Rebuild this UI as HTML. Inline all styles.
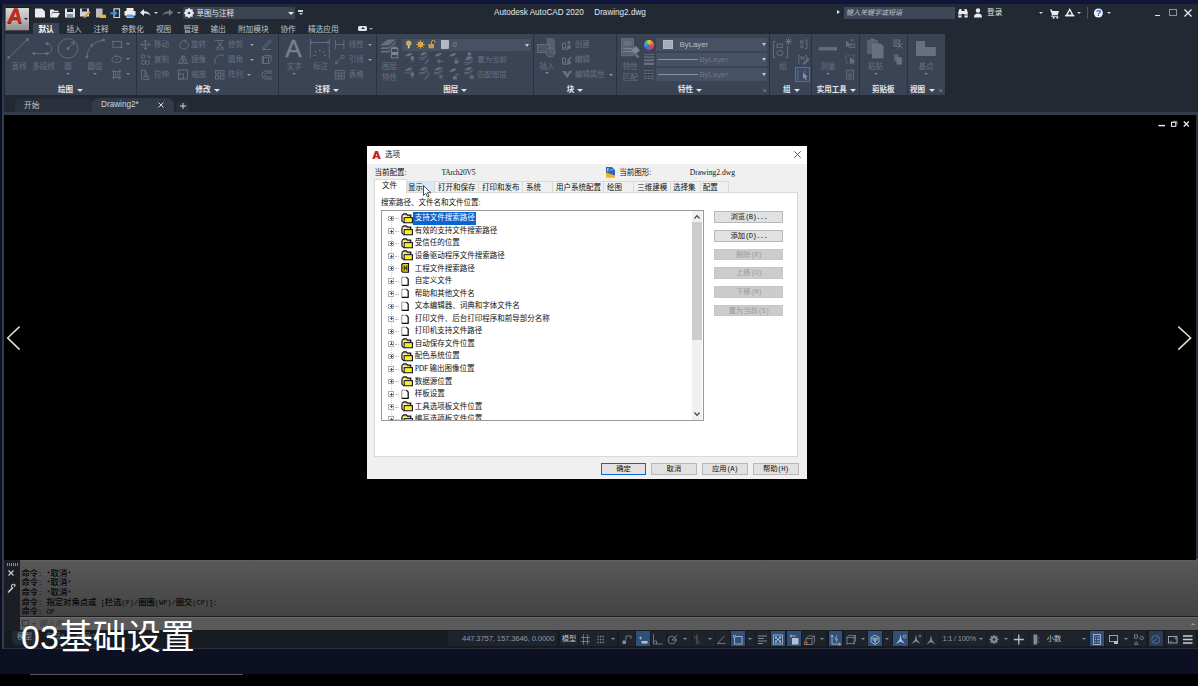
<!DOCTYPE html>
<html lang="zh-CN">
<head>
<meta charset="utf-8">
<title>AutoCAD 2020 - 选项</title>
<style>
*{box-sizing:border-box;margin:0;padding:0}
html,body{width:1198px;height:686px;overflow:hidden;background:#0a0e1f}
body{position:relative;font-family:"Liberation Sans","Noto Sans CJK SC",sans-serif;color:#d8dde6;font-size:8px;line-height:1}
.abs{position:absolute}
#bg{left:0;top:0;width:1198px;height:674px;background:linear-gradient(180deg,#10153c 0,#10153c 4px,#0c1024 5px,#0c1022 100%)}
#bottomblack{left:0;top:674px;width:1198px;height:12px;background:#000}
#bline{left:30px;top:674px;width:213px;height:1px;background:#5a5a5a}
#app{left:4px;top:4px;width:1194px;height:645px;background:#2a303b}
#leftstrip{left:2px;top:4px;width:3px;height:645px;background:linear-gradient(180deg,#222933 0,#222933 16.5px,#343c4b 16.5px,#343c4b 100%)}
/* title bar */
#titlebar{left:0;top:0;width:1194px;height:18px;background:#222933}
#tabsrow{left:0;top:18px;width:1194px;height:12px;background:#222933}
#ribbon{left:0;top:30px;width:1194px;height:61px;background:#222933}
.panel{position:absolute;top:0;height:61px;background:#3b4554}
.ptitle{position:absolute;left:0;right:0;bottom:0;height:12px;background:#353e4c;color:#dfe3ea;font-size:8px;text-align:center;line-height:12px;font-weight:bold}
#doctabs{left:0;top:90.7px;width:1194px;height:20.5px;background:#222933}
#canvas{left:0;top:111px;width:1192.2px;height:444px;background:#000}
#cmd{left:0;top:555px;width:1194px;height:71px;background:#454545}
#status{left:0;top:625.6px;width:1194px;height:18.2px;background:#161a21}

.t{position:absolute;white-space:nowrap;line-height:10px;height:10px}
.w{color:#e2e6ec}
.d{color:#677081}
.tab{position:absolute;top:2.5px;height:10px;line-height:10px;font-size:7.7px;color:#bec4ce;white-space:nowrap;margin-left:.4px}
svg{position:absolute;overflow:visible}
.arr{position:absolute;width:0;height:0;border-left:2px solid transparent;border-right:2px solid transparent;border-top:2.5px solid #9aa2b0}
.arrw{position:absolute;width:0;height:0;border-left:2.5px solid transparent;border-right:2.5px solid transparent;border-top:3px solid #dfe3ea}
.arrd{position:absolute;width:0;height:0;border-left:2px solid transparent;border-right:2px solid transparent;border-top:2.5px solid #7d8696}

.sep{position:absolute;top:0;width:1px;height:61px;background:#2b323e}
.rl{font-size:7.5px}
.rt{font-size:7.5px;font-weight:bold;color:#e4e7ec}

.cl{position:absolute;left:17.4px;height:10px;line-height:10px;font-size:8.35px;color:#060606;font-weight:500;white-space:nowrap;font-family:"Noto Sans CJK SC",sans-serif}
.cl i{font-style:normal;font-family:"Liberation Mono",monospace;font-size:6.95px;white-space:pre;font-weight:normal}

#dlg{left:366.5px;top:145.8px;width:440.1px;height:333.5px;background:#f0f0f0;font-family:"Liberation Sans","Noto Sans CJK SC",sans-serif}
.dt{font-size:7.5px;color:#111}
.ds{font-size:7.6px;color:#111;font-family:"Liberation Serif","Noto Serif CJK SC",serif}
.btn{position:absolute;height:11.7px;line-height:10.1px;font-size:7.3px;color:#111;text-align:center;background:#e1e1e1;border:.8px solid #b8b8b8;white-space:nowrap}
.btn i,.dt i{font-style:normal;font-family:"Liberation Mono",monospace;font-size:7.2px;letter-spacing:-.65px;white-space:pre}
.dt b{font-weight:normal;font-family:"Liberation Serif",serif;font-size:7.6px;letter-spacing:-.25px;white-space:pre}
.btn.dis{background:#cccccc;border-color:#c6c6c6;color:#9c9c9c}
.btn.def{border:1.2px solid #0a64d2;line-height:9.3px}
#cap{left:21px;top:612.7px;font-size:34px;line-height:48px;height:48px;color:#fff;font-family:"Liberation Sans","Noto Sans CJK SC",sans-serif;font-weight:400;white-space:nowrap;z-index:20}
</style>
</head>
<body>
<div id="bg" class="abs"></div>
<div id="bottomblack" class="abs"></div>
<div id="bline" class="abs"></div>
<div id="leftstrip" class="abs"></div>
<div id="app" class="abs">
  <div id="titlebar" class="abs">
    <!-- quick access -->
    <svg style="left:31px;top:4px" width="140" height="10" viewBox="0 0 140 10">
      <path d="M0 0.5h7l3 3v6h-10z" fill="#e9ebee"/>
      <path d="M15 1.5h3.5l1 1.2h4v1.5h-6l-2.5 5z M17.5 5h7.5l-2.5 4.5h-7.5z" fill="#e9ebee"/>
      <path d="M30 0.5h10v9h-10z" fill="#dfe2e6"/><rect x="32" y="0.5" width="6" height="3.5" fill="#222933"/><rect x="32" y="6" width="6" height="3.5" fill="#8c93a0"/>
      <path d="M45 0.5h9v8h-9z" fill="#cfd3d9"/><rect x="47" y="0.5" width="5" height="3" fill="#222933"/><path d="M49 8l5-5 1.5 1.5-5 5-2 .5z" fill="#e3a33a"/>
      <path d="M61 0.5h6.5v9h-6.5z" fill="#b8bdc6"/><path d="M65 6h2l.6.8h3.4v3.2h-6z" fill="#e8b04a"/>
      <path d="M79 0.8h5.5v8.7h-5.5z" fill="none" stroke="#cfd3d9" stroke-width="1.2"/><path d="M75.5 4.2h4v-1.8l3 2.8-3 2.8v-1.8h-4z" fill="#3c8fe0"/>
      <path d="M91.5 0h7v3h-7z M89.5 3h11v4.5h-2v2.5h-7v-2.5h-2z" fill="#eceef1"/><rect x="92" y="6.5" width="6" height="3" fill="#5aa0e6"/>
      <path d="M105 4.5l4-3.5v2.2c3.5 0 6 1.6 6.5 4.8-1.5-2-3.5-2.5-6.5-2.4v2.4z" fill="#e9ebee"/>
      <path d="M138 4.5l-4-3.5v2.2c-3.5 0-6 1.6-6.5 4.8 1.5-2 3.5-2.5 6.5-2.4v2.4z" fill="#6e7685"/>
    </svg>
    <div class="arr" style="left:150px;top:8px;border-top-color:#cfd3d9"></div>
    <div class="arr" style="left:172.5px;top:8px;border-top-color:#8d95a3"></div>
    <!-- workspace combo -->
    <div class="abs" style="left:179.2px;top:3.3px;width:111.6px;height:12px;background:#3a4351"></div>
    <svg style="left:180px;top:4px" width="10" height="10" viewBox="0 0 10 10"><circle cx="5" cy="5" r="3" fill="none" stroke="#e9ebee" stroke-width="2"/><path d="M5 0v10M0 5h10M1.5 1.5l7 7M8.5 1.5l-7 7" stroke="#e9ebee" stroke-width="1.5"/><circle cx="5" cy="5" r="1.3" fill="#3a4351"/></svg>
    <div class="t w" style="left:192.5px;top:5.2px;font-size:7.5px">草图与注释</div>
    <div class="arrw" style="left:284.3px;top:8px;border-left-width:3px;border-right-width:3px;border-top-width:3.5px"></div>
    <div class="abs" style="left:294px;top:6px;width:5px;height:1.5px;background:#cfd3d9"></div>
    <div class="arr" style="left:294.5px;top:8.5px;border-top-color:#cfd3d9"></div>
    <!-- title -->
    <div class="t w" style="left:490px;top:3.5px;font-size:8.15px">Autodesk AutoCAD 2020</div>
    <div class="t w" style="left:590.3px;top:3.5px;font-size:8.15px">Drawing2.dwg</div>
    <!-- search -->
    <div class="abs" style="left:833px;top:6px;width:0;height:0;border-top:2.5px solid transparent;border-bottom:2.5px solid transparent;border-left:3px solid #dfe3ea"></div>
    <div class="abs" style="left:840px;top:3px;width:111px;height:12px;background:#3e4858"></div>
    <div class="t" style="left:842px;top:4px;font-size:7px;font-style:italic;color:#b9c0cc">键入关键字或短语</div>
    <svg style="left:954px;top:4px" width="50" height="10" viewBox="0 0 50 10">
      <path d="M.3 9.5v-5.5l1.2-3h2v8.5z M9.7 9.5v-5.5l-1.2-3h-2v8.5z M3.5 3h3v3h-3z" fill="#e9ebee"/><path d="M.3 7h3.2M6.5 7h3.2" stroke="#222933" stroke-width=".8"/>
      <circle cx="20" cy="2.5" r="2.2" fill="#e9ebee"/><path d="M16 9.5c0-3 1.5-4 4-4s4 1 4 4z" fill="#e9ebee"/>
    </svg>
    <div class="t w" style="left:983px;top:4px;font-size:7.7px">登录</div>
    <div class="arr" style="left:1035px;top:8px;border-top-color:#cfd3d9"></div>
    <svg style="left:1045px;top:4px" width="70" height="11" viewBox="0 0 70 11">
      <path d="M1 1.5h1.8l.6 1.5h6.6l-1.3 4h-5l-.5.8h6v1h-7.2l1-2z" fill="#e9ebee"/><circle cx="4.6" cy="9.8" r="1" fill="#e9ebee"/><circle cx="8.3" cy="9.8" r="1" fill="#e9ebee"/>
      <path d="M17.5 7.3l3.2-5.8 3.2 5.8z" fill="none" stroke="#e9ebee" stroke-width="1.4"/><path d="M16 7.7h9.4" stroke="#e9ebee" stroke-width="1.5"/>
      <circle cx="49.4" cy="5" r="4.5" fill="#f1f3f6"/>
    </svg>
    <div class="t" style="left:1091.7px;top:4px;font-size:9px;font-weight:bold;color:#2450c0">?</div>
    <div class="arr" style="left:1073px;top:8px;border-top-color:#cfd3d9"></div>
    <div class="abs" style="left:1083px;top:3px;width:1px;height:12px;background:#4a5361"></div>
    <div class="arr" style="left:1103px;top:8px;border-top-color:#cfd3d9"></div>
    <div class="abs" style="left:1151px;top:11px;width:5.2px;height:1.2px;background:#dfe2e7"></div>
    <div class="abs" style="left:1165px;top:5px;width:8px;height:7px;border:1px solid #8d95a3;border-top-width:1.5px"></div>
    <svg style="left:1180px;top:5px" width="8" height="8" viewBox="0 0 8 8"><path d="M0.5 0.5l7 7M7.5 0.5l-7 7" stroke="#e9ebee" stroke-width="1.3"/></svg>
  </div>
  <div id="tabsrow" class="abs">
    <div class="abs" style="left:29px;top:1px;width:26px;height:11px;background:#3b4554"></div>
    <div class="tab" style="left:34px;color:#fff;font-weight:bold">默认</div>
    <div class="tab" style="left:62px">插入</div>
    <div class="tab" style="left:89px">注释</div>
    <div class="tab" style="left:116.5px">参数化</div>
    <div class="tab" style="left:151.5px">视图</div>
    <div class="tab" style="left:179px">管理</div>
    <div class="tab" style="left:206px">输出</div>
    <div class="tab" style="left:233.5px">附加模块</div>
    <div class="tab" style="left:276px">协作</div>
    <div class="tab" style="left:303.5px">精选应用</div>
    <div class="abs" style="left:354px;top:4px;width:9px;height:5px;background:#dfe3ea;border-radius:1.5px"></div>
    <div class="abs" style="left:356.5px;top:5px;width:0;height:0;border-left:2px solid transparent;border-right:2px solid transparent;border-bottom:2.5px solid #222933"></div>
    <div class="arr" style="left:365px;top:6px"></div>
  </div>
  <div id="appbtn" class="abs" style="left:0;top:0;width:30px;height:30px;z-index:5">
    <div class="abs" style="left:.5px;top:2.6px;width:25.4px;height:24.6px;background:linear-gradient(180deg,#d8d8d8 0%,#c2c2c2 40%,#8f8f8f 100%);border:1px solid #1c1c1c;border-left-color:#666;border-bottom-color:#444"></div>
    <div class="t" style="left:1.8px;top:-.1px;font-size:21.5px;line-height:24px;height:24px;font-weight:bold;color:#c42a20;text-shadow:.6px .6px 0 #8e1a14;transform:scaleX(.98) skewX(-7deg);transform-origin:0 100%">A</div>
    <div class="abs" style="left:19.5px;top:13.7px;width:0;height:0;border-left:2px solid transparent;border-right:2px solid transparent;border-top:2.5px solid #222"></div>
  </div>
  <div id="ribbon" class="abs">
    <div class="abs" style="left:0.5px;top:0;width:940px;height:61px;background:#3b4454"></div>
    <div class="sep" style="left:132px"></div><div class="sep" style="left:274px"></div><div class="sep" style="left:371.5px"></div><div class="sep" style="left:529px"></div><div class="sep" style="left:612px"></div><div class="sep" style="left:764.8px"></div><div class="sep" style="left:807.4px"></div><div class="sep" style="left:855.3px"></div><div class="sep" style="left:902.6px"></div>
    <!-- 绘图 -->
    <svg style="left:0;top:0" width="132" height="48" viewBox="0 0 132 48" fill="none" stroke="#677080" stroke-width="0.9">
      <path d="M5 23.5L23.5 5.5"/><rect x="4" y="22.5" width="1.6" height="1.6" fill="#677080"/><rect x="22.7" y="4.8" width="1.6" height="1.6" fill="#677080"/>
      <path d="M29.8 19.5H43M43 19.5a4.9 4.9 0 0 0 0-9.8"/><rect x="29" y="18.7" width="1.6" height="1.6" fill="#677080"/><rect x="42.2" y="18.7" width="1.6" height="1.6" fill="#677080"/><rect x="42.2" y="8.9" width="1.6" height="1.6" fill="#677080"/>
      <circle cx="63.9" cy="14.5" r="9.8"/><path d="M63.9 14.5l6-6M69.9 8.5v3M69.9 8.5h-3"/><rect x="63.1" y="13.7" width="1.6" height="1.6" fill="#677080"/>
      <path d="M82.9 23c.5-8 6-15.5 16.6-17"/><rect x="82.1" y="22.2" width="1.6" height="1.6" fill="#677080"/><rect x="87" y="10.3" width="1.6" height="1.6" fill="#677080"/><rect x="98.7" y="5.2" width="1.6" height="1.6" fill="#677080"/>
      <rect x="108.9" y="7.5" width="8.5" height="5.8"/><rect x="108.1" y="6.7" width="1.5" height="1.5" fill="#677080" stroke="none"/><rect x="116.6" y="12.5" width="1.5" height="1.5" fill="#677080" stroke="none"/>
      <ellipse cx="112.6" cy="25.4" rx="4.6" ry="3.2"/><rect x="112" y="24.7" width="1.3" height="1.3" fill="#677080" stroke="none"/><rect x="112" y="21.3" width="1.3" height="1.3" fill="#677080" stroke="none"/>
      <path d="M109.5 35.5v10M115.8 35.5v10M108.5 37.5h8.5M108.5 43.5h8.5M111.5 37.5v6M113.8 37.5v6"/>
    </svg>
    <div class="t d rl" style="left:7.5px;top:28.3px">直线</div>
    <div class="t d rl" style="left:28.3px;top:28.3px">多段线</div>
    <div class="t d rl" style="left:60.3px;top:28.3px">圆</div>
    <div class="t d rl" style="left:83.5px;top:28.3px">圆弧</div>
    <div class="arrd" style="left:62.4px;top:38.5px"></div><div class="arrd" style="left:88.6px;top:38.5px"></div>
    <div class="arrd" style="left:121.9px;top:9.4px"></div><div class="arrd" style="left:121.9px;top:24.4px"></div><div class="arrd" style="left:121.9px;top:39.4px"></div>
    <div class="t rt" style="left:54px;top:51.2px">绘图</div><div class="arrw" style="left:72.6px;top:54.8px;border-left-width:3px;border-right-width:3px;border-top-width:3.5px"></div>
    <!-- 修改 -->
    <svg style="left:133px;top:0" width="141" height="48" viewBox="133 0 141 48" fill="none" stroke="#677080" stroke-width="0.9">
      <path d="M141.4 6v9.5M136.6 10.7h9.6M141.4 6l-1.5 1.8M141.4 6l1.5 1.8M141.4 15.5l-1.5-1.8M141.4 15.5l1.5-1.8M136.6 10.7l1.8-1.5M136.6 10.7l1.8 1.5M146.2 10.7l-1.8-1.5M146.2 10.7l-1.8 1.5"/>
      <circle cx="139" cy="22.5" r="1.8"/><circle cx="139.5" cy="28.5" r="2"/><circle cx="143.5" cy="28.5" r="2"/><path d="M142.5 22h3v2.5"/>
      <path d="M137.5 36v9h4M137.5 36h3.5l4 9.5h-4M141 36v6M139 42.5h4l-1-1M143 42.5l-1 1"/>
      <path d="M182 7a4.3 4.3 0 1 0 1.5 1.2M179.5 5.5l2.8 1.5-1.5 2.6"/>
      <path d="M174.5 29.5l3.8-8v8zM179.8 21.5l3.8 8h-3.8z"/>
      <rect x="174.5" y="36" width="9" height="9"/><rect x="174.5" y="40" width="5" height="5"/>
      <path d="M211 6.5h9M214 7.5l4 6M218 7.5l-4 6"/><circle cx="213.8" cy="14.5" r="1.3"/><circle cx="218.2" cy="14.5" r="1.3"/>
      <path d="M211 30v-3.5a5.5 5.5 0 0 1 5.5-5.5h3.5" stroke-dasharray="none"/>
      <rect x="211.5" y="36.5" width="3.3" height="3.3"/><rect x="216.7" y="36.5" width="3.3" height="3.3"/><rect x="211.5" y="41.7" width="3.3" height="3.3"/><rect x="216.7" y="41.7" width="3.3" height="3.3"/>
      <path d="M258.5 14l7-8 1.5 1.3-7 8zM258 15.5h9"/>
      <path d="M258 23.5h6.5v6h-6.5zM258 23.5l2.5-2h6.5l-2.5 2M267 21.5v6l-2.5 2M259.5 22v7.5"/>
      <path d="M268 37h-6a4 4 0 0 0 0 8h6M268 39h-5.5a2 2 0 0 0 0 4h5.5"/>
    </svg>
    <div class="t d rl" style="left:150px;top:5.7px">移动</div><div class="t d rl" style="left:150px;top:20.8px">复制</div><div class="t d rl" style="left:150px;top:35.7px">拉伸</div>
    <div class="t d rl" style="left:187px;top:5.7px">旋转</div><div class="t d rl" style="left:187px;top:20.8px">镜像</div><div class="t d rl" style="left:187px;top:35.7px">缩放</div>
    <div class="t d rl" style="left:224px;top:5.7px">修剪</div><div class="t d rl" style="left:224px;top:20.8px">圆角</div><div class="t d rl" style="left:224px;top:35.7px">阵列</div>
    <div class="arr" style="left:245.8px;top:9.7px"></div><div class="arr" style="left:245.8px;top:24.8px"></div><div class="arr" style="left:243.2px;top:39.7px"></div>
    <div class="t rt" style="left:191.4px;top:51.2px">修改</div><div class="arrw" style="left:209.8px;top:54.8px;border-left-width:3px;border-right-width:3px;border-top-width:3.5px"></div>
    <!-- 注释 -->
    <div class="t" style="left:281.3px;top:2px;font-size:24.5px;line-height:26px;height:26px;color:#77808f;-webkit-text-stroke:.45px #77808f">A</div>
    <div class="t d rl" style="left:282.7px;top:28.3px">文字</div><div class="arrd" style="left:288.3px;top:38.7px"></div>
    <svg style="left:300px;top:0" width="72" height="48" viewBox="300 0 72 48" fill="none" stroke="#677080" stroke-width="0.9">
      <path d="M306.3 5v19.5M325.3 5v19.5M306.3 8.5h19M306.3 8.5l2-1M306.3 8.5l2 1M325.3 8.5l-2-1M325.3 8.5l-2 1M315.8 15.5v2.5M311 17l1.5 2M320.6 17l-1.5 2M309.5 21.5h2.5M319.6 21.5h2.5"/>
      <path d="M331.4 6v9M339.9 6v9M331.4 10.5h8.5"/>
      <path d="M331.8 29.5l5-5.5M331.8 29.5l.3-2.5M331.8 29.5l2.4-.4"/><circle cx="338.5" cy="22.7" r="1.7"/>
      <path d="M331.3 36.5h9v8.5h-9zM331.3 39h9M331.3 42h9M334.3 39v6M337.3 39v6" />
    </svg>
    <div class="t d rl" style="left:309px;top:28.3px">标注</div>
    <div class="t d rl" style="left:344.8px;top:5.7px">线性</div><div class="t d rl" style="left:344.8px;top:20.8px">引线</div><div class="t d rl" style="left:344.8px;top:35.7px">表格</div>
    <div class="arr" style="left:364px;top:9.7px"></div><div class="arr" style="left:364px;top:24.8px"></div>
    <div class="t rt" style="left:311px;top:51.2px">注释</div><div class="arrw" style="left:329.4px;top:54.8px;border-left-width:3px;border-right-width:3px;border-top-width:3.5px"></div>
    <!-- 图层 -->
    <svg style="left:372px;top:0" width="157" height="48" viewBox="372 0 157 48" stroke="none" fill="#677080">
      <path d="M375.8 11.4l8-6h8l-7.3 6z"/>
      <path d="M375.8 14.9h8.7l7.3-6v-1.7l-7.3 6h-6.6z"/>
      <path d="M375.8 18.4h8.7l7.3-6v-1.7l-7.3 6h-6.6z"/>
      <path d="M386.7 12.7h6.3l1.7 1.7v10.3h-8z" fill="#7d8696" stroke="#3b4454" stroke-width=".8"/><rect x="388" y="15" width="5.4" height="3" fill="#3b4454"/><rect x="388" y="21" width="5.4" height="2.4" fill="#3b4454"/>
      <path d="M400.6 22.3l4.0-3.0h4.5l-4.0 3.0z"/><circle cx="408.4" cy="24.0" r="1.9"/><rect x="407.6" y="25.6" width="1.6" height="2"/>
      <path d="M415.3 21.3l4.0-3.0h4.5l-4.0 3.0zM415.3 23.0h4.5l4.0-3.0v0.75l-4.0 3.0h-4.5zM415.3 24.7h4.5l4.0-3.0v0.75l-4.0 3.0h-4.5z"/><path d="M420.8 29.8l4.2-4.5" stroke="#677080" stroke-width="1.1"/>
      <path d="M430.0 22.3l4.0-3.0h4.5l-4.0 3.0z"/><path d="M433.5 27.3h5.5M433.5 27.3l2-1.8M433.5 27.3l2 1.8" stroke="#677080" stroke-width="1.1" fill="none"/>
      <path d="M444.7 22.3l4.0-3.0h4.5l-4.0 3.0z"/><rect x="450.5" y="26.3" width="3.8" height="3.3"/><path d="M451.3 26.3v-1.2a1.1 1.1 0 0 1 2.2 0v1.2" stroke="#677080" stroke-width=".8" fill="none"/>
      <circle cx="465.3" cy="19.8" r="1.9"/><path d="M462.8 22.6h5l.8 2h-6.6z"/><path d="M460.3 26.3l4.0-3.0h4.5l-4.0 3.0zM460.3 28.0h4.5l4.0-3.0v0.75l-4.0 3.0h-4.5zM460.3 29.7h4.5l4.0-3.0v0.75l-4.0 3.0h-4.5z"/>
      <path d="M400.6 36.7l4.0-3.0h4.5l-4.0 3.0zM400.6 38.4h4.5l4.0-3.0v0.75l-4.0 3.0h-4.5z"/><circle cx="408.4" cy="40.2" r="1.9"/><rect x="407.6" y="41.8" width="1.6" height="2"/>
      <path d="M415.3 36.2l4.0-3.0h4.5l-4.0 3.0zM415.3 37.9h4.5l4.0-3.0v0.75l-4.0 3.0h-4.5zM415.3 39.6h4.5l4.0-3.0v0.75l-4.0 3.0h-4.5z"/><path d="M420.8 45.2l4.2-4.5" stroke="#677080" stroke-width="1.1"/><path d="M423.8 39.2l1.5-.3-.3 1.5" fill="none" stroke="#677080" stroke-width=".6"/>
      <path d="M430.0 36.2l4.0-3.0h4.5l-4.0 3.0zM430.0 37.9h4.5l4.0-3.0v0.75l-4.0 3.0h-4.5zM430.0 39.6h4.5l4.0-3.0v0.75l-4.0 3.0h-4.5z"/><path d="M434.5 42.7h5M437 40.2v5M435.2 40.9l3.6 3.6M438.8 40.9l-3.6 3.6" stroke="#677080" stroke-width=".7"/>
      <path d="M444.7 37.7l4.0-3.0h4.5l-4.0 3.0z"/><rect x="449.0" y="42.2" width="3.8" height="3.3"/><path d="M452.0 42.2v-1.2a1.1 1.1 0 0 1 2.2 0v.8" stroke="#677080" stroke-width=".8" fill="none"/>
      <path d="M460.3 36.2l4.0-3.0h4.5l-4.0 3.0zM460.3 37.9h4.5l4.0-3.0v0.75l-4.0 3.0h-4.5zM460.3 39.6h4.5l4.0-3.0v0.75l-4.0 3.0h-4.5z"/><circle cx="467.8" cy="43.2" r="2.1"/><path d="M466.6 43.2l1 1 1.5-2" fill="none" stroke="#3b4454" stroke-width=".6"/>
    </svg>
    <div class="t d rl" style="left:378px;top:28.3px">图层</div><div class="t d rl" style="left:378px;top:38.7px">特性</div>
    <div class="abs" style="left:398px;top:4.7px;width:129px;height:12px;background:#465163"></div>
    <svg style="left:398px;top:4px" width="60" height="14" viewBox="398 4 60 14">
      <circle cx="404.7" cy="9.3" r="2.7" fill="#d2a85a"/><rect x="403.8" y="11.5" width="1.8" height="2.8" fill="#c9ced8"/>
      <circle cx="416.5" cy="10.5" r="2.7" fill="#d9a545"/><path d="M416.5 6.3v8.4M412.3 10.5h8.4M413.5 7.5l6 6M419.5 7.5l-6 6" stroke="#d9a545" stroke-width="1"/>
      <rect x="424.5" y="10" width="5.5" height="4.3" fill="#c79d4e"/><path d="M427.5 10v-2a1.7 1.7 0 0 1 3.4 0v.8" stroke="#c79d4e" stroke-width="1" fill="none"/>
      <rect x="437.5" y="6.5" width="7" height="8" fill="#b3b9c4" stroke="#d5d9e0" stroke-width=".6"/>
    </svg>
    <div class="t" style="left:448.5px;top:5.7px;font-size:8px;color:#7a8496">0</div>
    <div class="arrw" style="left:521px;top:9.5px;border-top-color:#c3c9d3"></div>
    <div class="t d rl" style="left:473.5px;top:20.8px;font-size:7.3px">置为当前</div><div class="t d rl" style="left:473.5px;top:35.7px;font-size:7.3px">匹配图层</div>
    <div class="t rt" style="left:439.2px;top:51.2px">图层</div><div class="arrw" style="left:456.9px;top:54.8px;border-left-width:3px;border-right-width:3px;border-top-width:3.5px"></div>
    <!-- 块 -->
    <svg style="left:530px;top:0" width="82" height="48" viewBox="530 0 82 48" fill="#677080" stroke="none">
      <path d="M542.5 4h6l2.5 2.5v13.5h-8.5z" fill="#586070"/>
      <rect x="533.5" y="10.5" width="12" height="8" fill="#4d5666" stroke="#677080" stroke-width=".9"/>
      <circle cx="546.5" cy="18.5" r="4.5" fill="#4d5666" stroke="#677080" stroke-width=".9"/><path d="M546.5 14v4.5h4.5" stroke="#677080" stroke-width=".7" fill="none"/>
      <path d="M558.5 9h3v5h-3v1.2h5.5v-1.2M558.5 9v5" stroke="#677080" stroke-width="1" fill="none"/><circle cx="565" cy="13" r="2"/><path d="M565 6l.7 1.5 1.6.2-1.2 1.1.3 1.6-1.4-.8-1.4.8.3-1.6-1.2-1.1 1.6-.2z"/>
      <path d="M558.5 24h3v5h-3v1.2h5.5v-1.2M558.5 24v5" stroke="#677080" stroke-width="1" fill="none"/><circle cx="565" cy="28.5" r="2"/><path d="M563 26.5l3.5-4 1.2 1-3.5 4z"/>
      <path d="M558 37h4l1.5 3 1.5-3h2l-3.5 7.5z" /><path d="M563.5 40.5l3.5-4 1.2 1-3.5 4z"/>
    </svg>
    <div class="t d rl" style="left:535.4px;top:28.3px">插入</div><div class="arrd" style="left:540.7px;top:38.3px"></div>
    <div class="t d rl" style="left:570.7px;top:5.7px">创建</div><div class="t d rl" style="left:570.7px;top:20.8px">编辑</div><div class="t d rl" style="left:570.7px;top:35.7px">编辑属性</div>
    <div class="arr" style="left:605px;top:39.7px"></div>
    <div class="t rt" style="left:562.7px;top:51.2px">块</div><div class="arrw" style="left:573.3px;top:54.8px;border-left-width:3px;border-right-width:3px;border-top-width:3.5px"></div>
    <!-- 特性 -->
    <svg style="left:613px;top:0" width="152" height="48" viewBox="613 0 152 48" fill="#677080" stroke="none">
      <path d="M617.5 4.7h12v17h-12z" fill="#596171" stroke="#677080" stroke-width=".9"/><rect x="619.5" y="6.7" width="8" height="5" fill="#677080"/><path d="M619 14.5h9M619 17.5h9M621.5 13.5v2M625 16.5v2" stroke="#7b8494" stroke-width=".9"/>
      <path d="M627 16l5-4 4 4.5-5 4z" fill="#7b8494"/><path d="M630.5 21l3 3.5 2-1.8-3-3.5z"/>
      <rect x="640" y="20" width="10" height=".8"/><rect x="640" y="22.5" width="10" height="1.3"/><rect x="640" y="25.3" width="10" height="1.9"/><rect x="640" y="28.6" width="10" height="2.4"/>
      <path d="M640 36.5h10M640 39.5h10M640 42.5h10M640 44.5h10" stroke="#677080" stroke-width=".9" stroke-dasharray="2.5 1"/>
    </svg>
    <div class="abs" style="left:639.8px;top:5.5px;width:10px;height:10px;border-radius:50%;background:conic-gradient(#f2c230 0deg,#f08a2c 50deg,#e8473f 100deg,#c83fb6 160deg,#6a4fe0 210deg,#2f8fe8 260deg,#35c0a0 310deg,#8ad03a 340deg,#f2c230 360deg)"></div>
    <div class="t d rl" style="left:618.8px;top:28.4px">特性</div><div class="t d rl" style="left:618.8px;top:38.7px">匹配</div>
    <div class="abs" style="left:652px;top:4px;width:110.8px;height:13px;background:#465163"></div>
    <div class="abs" style="left:652px;top:19px;width:110.8px;height:13px;background:#465163"></div>
    <div class="abs" style="left:652px;top:34px;width:110.8px;height:13px;background:#465163"></div>
    <div class="abs" style="left:659.4px;top:5.5px;width:9.6px;height:9.5px;background:#a6adba;border:.5px solid #b4bac6"></div>
    <div class="t" style="left:675.6px;top:5.5px;font-size:7.8px;color:#b7bdc9">ByLayer</div>
    <div class="abs" style="left:654px;top:25.3px;width:39.5px;height:.9px;background:#8b94a3"></div><div class="t" style="left:695.4px;top:20.5px;font-size:7.8px;color:#6e788a">ByLayer</div>
    <div class="abs" style="left:654px;top:40.3px;width:39.5px;height:.9px;background:#8b94a3"></div><div class="t" style="left:695.4px;top:35.5px;font-size:7.8px;color:#6e788a">ByLayer</div>
    <div class="arrw" style="left:757.5px;top:9px;border-top-color:#c3c9d3"></div><div class="arrw" style="left:757.5px;top:24px;border-top-color:#c3c9d3"></div><div class="arrw" style="left:757.5px;top:39px;border-top-color:#c3c9d3"></div>
    <div class="t rt" style="left:674px;top:51.2px">特性</div><div class="arrw" style="left:692.0px;top:54.8px;border-left-width:3px;border-right-width:3px;border-top-width:3.5px"></div>
    <div class="t" style="left:758px;top:51px;font-size:5px;color:#8e96a4">&#8690;</div>
    <!-- 组 -->
    <svg style="left:765px;top:0" width="180" height="48" viewBox="765 0 180 48" fill="none" stroke="#677080" stroke-width=".9">
      <path d="M771.5 7.5h-2v16h2M783.5 12v11.5h-2"/><rect x="773" y="10" width="5.5" height="3.5"/><ellipse cx="775.8" cy="19" rx="3" ry="2.5"/>
      <path d="M784.5 4v7M781 7.5h7M782 5l5 5M787 5l-5 5" stroke-width="1"/>
      <rect x="796.5" y="7" width="2.5" height="2"/><circle cx="797.8" cy="12.5" r="1.3"/><path d="M801 6h2v8.5h-2M801 10h1.5"/>
      <path d="M796 21.5h-1.2v7.5h1.2M801.5 21.5h1.2v4"/><rect x="797" y="23" width="3" height="2"/><path d="M799 29.5l5-5 1 1-5 5z" fill="#677080"/>
      <rect x="791.4" y="33.6" width="14.3" height="13.8" stroke="#3f7fc4" fill="#3a4a62"/>
      <path d="M795 37h-1.2v8h1.2M800 37h1.2v2" /><path d="M799 38.5v6.5l1.6-1.5 1.2 2.5 1-.5-1.2-2.4h2.2z" fill="#8b94a3" stroke="none"/>
      <!-- 实用工具 -->
      <rect x="814.8" y="12.8" width="18.2" height="3.6" fill="#677080" stroke="none"/><path d="M816 12.4v2M818 12.4v1.3M820 12.4v2M822 12.4v1.3M824 12.4v2M826 12.4v1.3M828 12.4v2M830 12.4v1.3M832 12.4v2" stroke="#3b4454" stroke-width=".5"/>
      <path d="M842 6.5v7l1.8-1.8 1.3 2.6 1-.5-1.3-2.5h2.5z" fill="#677080" stroke="none"/><rect x="847" y="10" width="3.5" height="3.5"/><path d="M846.5 5.5l1.5 2.5M849 5v2.5"/>
      <rect x="842" y="21" width="8" height="8" stroke-dasharray="1 1"/><path d="M846 23v7l1.8-1.8 1.3 2.6 1-.5-1.3-2.5h2.5z" fill="#677080" stroke="none"/>
      <rect x="842.5" y="36" width="7" height="9"/><path d="M844 38h4M844 40.5h4M844 42.5h4M845.3 39.5v4.5M846.8 39.5v4.5" stroke-width=".6"/>
      <!-- 剪贴板 -->
      <rect x="863" y="6" width="11" height="14" fill="#596171" stroke="none"/><rect x="866.5" y="4.7" width="4" height="2" fill="#677080" stroke="none"/>
      <path d="M868 9.5h8.5l3 3v12h-11.5z" fill="#677080" stroke="none"/>
      <rect x="890" y="6" width="5.5" height="6.5"/><path d="M890 8h5.5M890 10h5.5M892 6v6.5" stroke-width=".6"/><path d="M893.5 14.5l5-5.5M893.5 9.5l5 5" stroke-width="1"/>
      <path d="M890 20h4.5v7.5h-4.5z" fill="#596171" stroke="none"/><path d="M892.5 23h4l1.5 1.5v6h-5.5z" fill="#677080" stroke="none"/>
      <!-- 视图 -->
      <path d="M912 6.9h9v6h10.8v9h-19.8z" fill="#677080" stroke="none"/>
    </svg>
    <div class="t d rl" style="left:775.2px;top:28.4px">组</div>
    <div class="t rt" style="left:779px;top:51.2px">组</div><div class="arrw" style="left:789.5px;top:54.8px;border-left-width:3px;border-right-width:3px;border-top-width:3.5px"></div>
    <div class="t d rl" style="left:816.4px;top:28.3px">测量</div><div class="arrd" style="left:822px;top:38.7px"></div>
    <div class="t rt" style="left:812.8px;top:51.2px">实用工具</div><div class="arrw" style="left:846.0px;top:54.8px;border-left-width:3px;border-right-width:3px;border-top-width:3.5px"></div>
    <div class="t d rl" style="left:864px;top:28.3px">粘贴</div><div class="arrd" style="left:869.5px;top:38.7px"></div>
    <div class="t rt" style="left:868px;top:51.2px">剪贴板</div>
    <div class="t d rl" style="left:914.6px;top:28.3px">基点</div><div class="arrd" style="left:920px;top:38.7px"></div>
    <div class="t rt" style="left:906px;top:51.2px">视图</div><div class="arrw" style="left:924.5px;top:54.8px;border-left-width:3px;border-right-width:3px;border-top-width:3.5px"></div>
    <div class="t" style="left:934px;top:51px;font-size:5px;color:#8e96a4">&#8690;</div>
  </div>

  <div id="doctabs" class="abs">
    <div class="abs" style="left:0;top:17px;width:1194px;height:3.5px;background:#333b48"></div>
    <div class="abs" style="left:11px;top:3.5px;width:80px;height:13.5px;background:#29303b;border-radius:5px 8px 0 0"></div>
    <div class="abs" style="left:88px;top:3.5px;width:82px;height:14px;background:#333b48;border-radius:7px 7px 0 0"></div>
    <div class="abs" style="left:172px;top:6.5px;width:13px;height:10.5px;background:#29303b;border-radius:4px 5px 0 0"></div>
    <div class="t" style="left:20px;top:6px;font-size:7.7px;color:#c3c8d1">开始</div>
    <div class="t" style="left:97px;top:5.7px;font-size:8.2px;color:#cfd4dc">Drawing2*</div>
    <svg style="left:153.5px;top:7.5px" width="6" height="6" viewBox="0 0 6 6"><path d="M.5.5l5 5M5.5.5l-5 5" stroke="#cfd4dc" stroke-width="1"/></svg>
    <svg style="left:175.5px;top:8.5px" width="6" height="6" viewBox="0 0 6 6"><path d="M3 0v6M0 3h6" stroke="#cfd4dc" stroke-width="1"/></svg>
  </div>
  <div id="canvas" class="abs">
    <svg style="left:0;top:0" width="1192" height="444" viewBox="4 115 1192 444" fill="none" stroke="#dcdcdc">
      <path d="M19.6 326.6L7.6 337.9l12 11.7M1178.3 326.6l12.4 11.3-12.4 11.7" stroke-width="1.5"/>
      <path d="M1158.4 125.6h6.6" stroke-width="1.5" stroke="#e8e8e8"/>
      <rect x="1171.5" y="122.3" width="4.3" height="4" stroke="#e8e8e8" stroke-width="1.1"/><path d="M1172.8 121.3h4.2v3.5" stroke="#bdbdbd" stroke-width=".7"/>
      <path d="M1183.8 121.5l5 5M1188.8 121.5l-5 5" stroke="#e8e8e8" stroke-width="1.3"/>
    </svg>
  </div>
  <div id="cmd" class="abs">
    <div class="abs" style="left:0;top:0;width:1192.2px;height:.6px;background:#000;z-index:2"></div>
    <div class="abs" style="left:0;top:0;width:15.5px;height:71px;background:#1b1e25"></div>
    <div class="abs" style="left:15.5px;top:0;width:1178.5px;height:57.5px;background:linear-gradient(180deg,#646464 0,#646464 1.4px,#585858 1.6px,#4b4b4b 60%,#434343 100%)"></div>
    <div class="abs" style="left:15.5px;top:57px;width:1178.5px;height:1px;background:#1c1c1c"></div>
    <div class="abs" style="left:15.5px;top:58px;width:1178.5px;height:12.5px;background:#5a5a5a"></div>
    <div class="abs" style="left:15.5px;top:58px;width:1178.5px;height:1px;background:#6e6e6e"></div>
    <div class="abs" style="left:2.5px;top:3.5px;width:11px;height:3px;background:repeating-linear-gradient(90deg,#8a8a8a 0,#8a8a8a 1px,transparent 1px,transparent 2px)"></div>
    <svg style="left:3px;top:10px" width="10" height="30" viewBox="0 0 10 30" fill="none" stroke="#d0d0d0"><path d="M1.5 1.5l5 5M6.5 1.5l-5 5" stroke-width="1.1"/><path d="M1 23.5l5-5" stroke-width="1.6"/><path d="M5.5 19a2 2 0 1 1 2.7-2.7l-1.3 1.3" stroke-width="1.1"/></svg>
    <div class="cl" style="top:8.2px">命令<i>: *</i>取消<i>*</i></div>
    <div class="cl" style="top:17.4px">命令<i>: *</i>取消<i>*</i></div>
    <div class="cl" style="top:27px">命令<i>: *</i>取消<i>*</i></div>
    <div class="cl" style="top:36.5px">命令<i>: </i>指定对角点或<i> [</i>栏选<i>(F)/</i>圈围<i>(WP)/</i>圈交<i>(CP)]:</i></div>
    <div class="cl" style="top:45.7px">命令<i>: OP</i></div>
    <div class="abs" style="left:18px;top:61px;width:7px;height:6px;border:1px solid #3a3a3a"></div>
    <div class="arr" style="left:28px;top:64px;border-top-color:#333"></div>
    <div class="t" style="left:35px;top:59.5px;font-size:8px;color:#3e3e3e;font-style:italic">键入命令</div>
    <div class="abs" style="left:1187px;top:64px;width:0;height:0;border-left:2px solid transparent;border-right:2px solid transparent;border-bottom:2.5px solid #999"></div>
  </div>
  <div id="status" class="abs">
  <div class="abs" style="left:8px;top:1.5px;width:24px;height:14px;background:#232a34;border-radius:0 0 5px 5px"></div>
  <div class="t" style="left:13px;top:2px;font-size:7.5px;color:#8d94a0">模型</div>
  <div class="t" style="left:42px;top:2px;font-size:7.5px;color:#5f6775">布局1</div>
  <div class="t" style="left:72px;top:2px;font-size:7.5px;color:#5f6775">布局2</div>
  <div class="abs" style="left:444px;top:1.7px;width:109px;height:15px;background:#1e232c"></div>
  <div class="t" style="left:458px;top:4px;font-size:7.7px;color:#8f96a2;letter-spacing:-.15px">447.3757, 157.3646, 0.0000</div>
  <div class="abs" style="left:555.5px;top:1.7px;width:18.0px;height:15px;background:#1e232c"></div>
  <div class="t" style="left:557.7px;top:4.3px;font-size:7.3px;color:#bcc2cc">模型</div>
  <div class="abs" style="left:574.7px;top:1.7px;width:38.8px;height:15px;background:#1e232c"></div>
  <div class="abs" style="left:615px;top:1.7px;width:16px;height:15px;background:#1e232c"></div>
  <div class="abs" style="left:631.8px;top:1.7px;width:14.2px;height:15px;background:#30507a"></div>
  <div class="abs" style="left:647px;top:1.7px;width:15px;height:15px;background:#1e232c"></div>
  <div class="abs" style="left:663px;top:1.7px;width:24px;height:15px;background:#1e232c"></div>
  <div class="abs" style="left:688px;top:1.7px;width:23px;height:15px;background:#1e232c"></div>
  <div class="abs" style="left:712px;top:1.7px;width:14px;height:15px;background:#1e232c"></div>
  <div class="abs" style="left:727px;top:1.7px;width:13.5px;height:15px;background:#30507a"></div>
  <div class="abs" style="left:741.5px;top:1.7px;width:9.5px;height:15px;background:#1e232c"></div>
  <div class="abs" style="left:752px;top:1.7px;width:14px;height:15px;background:#1e232c"></div>
  <div class="abs" style="left:767px;top:1.7px;width:14px;height:15px;background:#30507a"></div>
  <div class="abs" style="left:783px;top:1.7px;width:13.8px;height:15px;background:#30507a"></div>
  <div class="abs" style="left:798px;top:1.7px;width:24px;height:15px;background:#1e232c"></div>
  <div class="abs" style="left:824.7px;top:1.7px;width:13.8px;height:15px;background:#30507a"></div>
  <div class="abs" style="left:839.5px;top:1.7px;width:23.5px;height:15px;background:#1e232c"></div>
  <div class="abs" style="left:864px;top:1.7px;width:13.7px;height:15px;background:#30507a"></div>
  <div class="abs" style="left:878.5px;top:1.7px;width:9.5px;height:15px;background:#1e232c"></div>
  <div class="abs" style="left:889.3px;top:1.7px;width:14.5px;height:15px;background:#30507a"></div>
  <div class="abs" style="left:905px;top:1.7px;width:15px;height:15px;background:#1e232c"></div>
  <div class="abs" style="left:921px;top:1.7px;width:14px;height:15px;background:#1e232c"></div>
  <div class="abs" style="left:936px;top:1.7px;width:46px;height:15px;background:#1e232c"></div>
  <div class="abs" style="left:983px;top:1.7px;width:24px;height:15px;background:#1e232c"></div>
  <div class="abs" style="left:1008px;top:1.7px;width:15.5px;height:15px;background:#1e232c"></div>
  <div class="abs" style="left:1025px;top:1.7px;width:60px;height:15px;background:#1e232c"></div>
  <div class="abs" style="left:1086px;top:1.7px;width:13.8px;height:15px;background:#30507a"></div>
  <div class="abs" style="left:1101px;top:1.7px;width:26px;height:15px;background:#1e232c"></div>
  <div class="abs" style="left:1128px;top:1.7px;width:14px;height:15px;background:#1e232c"></div>
  <div class="abs" style="left:1144.5px;top:1.7px;width:14.5px;height:15px;background:#283c57"></div>
  <div class="abs" style="left:1161px;top:1.7px;width:15px;height:15px;background:#1e232c"></div>
  <div class="abs" style="left:1177px;top:1.7px;width:15px;height:15px;background:#1e232c"></div>
  <div class="arr" style="left:606.8px;top:8.3px;border-top-color:#838995"></div>
  <div class="arr" style="left:679px;top:8.3px;border-top-color:#838995"></div>
  <div class="arr" style="left:703.5px;top:8.3px;border-top-color:#838995"></div>
  <div class="arr" style="left:744px;top:8.3px;border-top-color:#838995"></div>
  <div class="arr" style="left:815.7px;top:8.3px;border-top-color:#838995"></div>
  <div class="arr" style="left:856.8px;top:8.3px;border-top-color:#838995"></div>
  <div class="arr" style="left:881px;top:8.3px;border-top-color:#838995"></div>
  <div class="arr" style="left:975px;top:8.3px;border-top-color:#838995"></div>
  <div class="arr" style="left:1000.3px;top:8.3px;border-top-color:#838995"></div>
  <div class="arr" style="left:1077.8px;top:8.3px;border-top-color:#838995"></div>
  <div class="arr" style="left:1119.8px;top:8.3px;border-top-color:#838995"></div>
  <svg style="left:0;top:0" width="1194" height="19" viewBox="4 629.5 1194 19" fill="none" stroke="#838995" stroke-width=".8">
    <path d="M583.5 634v10M587.5 634v10M581 637h9M581 641h9"/>
    <path d="M597.5 636h1.3M600 636h1.3M602.5 636h1.3M597.5 639h1.3M600 639h1.3M602.5 639h1.3M597.5 642h1.3M600 642h1.3M602.5 642h1.3" stroke-width="1.3"/>
    <rect x="622.5" y="640" width="3.5" height="3.5" fill="#838995" stroke="none"/><path d="M626 640v-4.5h5v3"/>
    <path d="M639 637.5h3M640.5 636v3" stroke="#b4c0d4"/><rect x="641.5" y="640.5" width="6" height="2.5" fill="#b4c0d4" stroke="none"/>
    <path d="M653.5 633.5v10h9M653.5 640.5h3v3"/>
    <circle cx="672" cy="639.5" r="3.8"/><path d="M672 639.5l5.5-5M672 639.5h5"/>
    <path d="M697 634v10" stroke="#3f8f5a"/><path d="M693.5 634.5l7 9" stroke="#a03a3a"/>
    <path d="M717.5 643h8M717.5 643l7-7.5"/>
    <rect x="734.5" y="636" width="7.5" height="7.5" stroke="#b4c0d4"/><rect x="733.5" y="635" width="2" height="2" fill="#34567f" stroke="#b4c0d4" stroke-width=".6"/>
    <path d="M758 635.5h9M758 638h6M758 640.5h9M758 643h5" stroke-width="1.1"/>
    <rect x="773.5" y="634.5" width="9" height="9" stroke="#b4c0d4"/><path d="M775 636h2v2h-2zM779 636h2v2h-2zM777 638h2v2h-2zM775 640h2v2h-2zM779 640h2v2h-2z" fill="#b4c0d4" stroke="none"/>
    <rect x="792" y="637.5" width="6.5" height="6.5" fill="#b4c0d4" stroke="none"/><path d="M790 635.5h6M791 634v3" stroke="#b4c0d4"/>
    <path d="M806 638h6v6h-6zM806 638l2.5-2.5h6l-2.5 2.5M814.5 635.5v6l-2.5 2.5"/><rect x="804.5" y="641.5" width="2.5" height="2.5" stroke="#b0703a"/>
    <path d="M832 634.5v9h8.5M832 634.5l-1.3 1.8M832 634.5l1.3 1.8M840.5 643.5l-1.8-1.3M840.5 643.5l-1.8 1.3M837 635l-2 3.5h2.5l-1.5 3" stroke="#b4c0d4"/>
    <rect x="847" y="637" width="7" height="6"/><path d="M847 637l1.5-2h7l-1.5 2M855.5 635v5.5l-1.5 2"/><rect x="846.3" y="636.3" width="1.5" height="1.5" fill="#4a7ab5" stroke="none"/><rect x="853.3" y="636.3" width="1.5" height="1.5" fill="#4a7ab5" stroke="none"/><rect x="846.3" y="642.3" width="1.5" height="1.5" fill="#4a7ab5" stroke="none"/><rect x="853.3" y="642.3" width="1.5" height="1.5" fill="#4a7ab5" stroke="none"/>
    <path d="M875 634.5l4 2.5v4.5l-4 2.5-4-2.5v-4.5zM875 639v5M875 639l-4-2M875 639l4-2" stroke="#b4c0d4"/><circle cx="875" cy="639" r="1.7" stroke="#b4c0d4"/>
    <path d="M900.5 634l1 5 3.5 4.5-4.5-2.5-4.5 2.5 3.5-4.5z" fill="#b4c0d4" stroke="none"/><circle cx="904.5" cy="636" r="1.5" stroke="#b4c0d4" stroke-width=".7"/>
    <path d="M916 634l1 5 3.5 4.5-4.5-2.5-4.5 2.5 3.5-4.5z" fill="#838995" stroke="none"/><path d="M920 634v3M918.5 635.5h3"/>
    <path d="M931 634.5l1 5 3.5 4.5-4.5-2.5-4.5 2.5 3.5-4.5z" fill="#838995" stroke="none"/>
    <circle cx="994" cy="639" r="2.6" stroke-width="2"/><path d="M994 634.5v9M989.5 639h9M990.8 635.8l6.4 6.4M997.2 635.8l-6.4 6.4" stroke-width="1.3"/><circle cx="994" cy="639" r="1.2" fill="#1e232c" stroke="none"/>
    <path d="M1018.8 634v10M1013.8 639h10" stroke="#b9bec8" stroke-width="1.3"/>
    <rect x="1033.5" y="634" width="3.5" height="10" fill="#838995" stroke="none"/><path d="M1037 635.5h1.5M1037 637.5h2.5M1037 639.5h1.5M1037 641.5h2.5" stroke-width=".7"/>
    <rect x="1093.5" y="634" width="7" height="10" stroke="#b4c0d4"/><path d="M1095 636.5h1M1097 636.5h2.5M1095 639h1M1097 639h2.5M1095 641.5h1M1097 641.5h2.5" stroke="#b4c0d4" stroke-width=".8"/>
    <rect x="1109.5" y="635" width="8" height="6" stroke="#b9bec8"/><rect x="1114" y="640.5" width="4" height="3" fill="#b9bec8" stroke="none"/>
    <rect x="1134.5" y="634.5" width="3" height="3"/><circle cx="1141.8" cy="637.5" r="1.7"/><path d="M1138 644h-3.5l1.8-3z"/>
    <circle cx="1155.8" cy="639" r="4" stroke="#5d7796"/><path d="M1153.5 641.5l4.5-5" stroke="#5d7796"/>
    <rect x="1168.5" y="636" width="8.5" height="6.5" stroke="#b9bec8"/><path d="M1174.5 637.5h1.5v1.5M1170 641h1.5" stroke="#b9bec8" stroke-width=".7"/>
    <path d="M1183 635.5h9.5M1183 639h9.5M1183 642.5h9.5" stroke="#c9cdd5" stroke-width="1.3"/>
  </svg>
  <div class="t" style="left:938.5px;top:4.2px;font-size:7.4px;color:#8f96a2;letter-spacing:-.2px">1:1 / 100%</div>
  <div class="t" style="left:1042.8px;top:4.3px;font-size:7.3px;color:#bcc2cc">小数</div>
</div><!--endstatus-->
</div>
<div id="dlg" class="abs">
  <div class="abs" style="left:0;top:0;width:440px;height:18.7px;background:#fff"></div>
  <div class="t" style="left:5.6px;top:4.1px;font-size:11.8px;line-height:11px;height:11px;font-weight:bold;color:#c4241b;text-shadow:.3px 0 0 #c4241b">A</div>
  <div class="t dt" style="left:18.5px;top:4.5px">选项</div>
  <svg style="left:427px;top:5.5px" width="7" height="7" viewBox="0 0 7 7"><path d="M.3.3l6.4 6.4M6.7.3l-6.4 6.4" stroke="#333" stroke-width=".8"/></svg>
  <div class="t dt" style="left:7.9px;top:22.2px">当前配置:</div>
  <div class="t ds" style="left:74.9px;top:22.2px;font-size:7.5px;letter-spacing:-.2px">TArch20V5</div>
  <svg style="left:239.6px;top:21.5px" width="9" height="10.2" viewBox="0 0 9 10.2"><path d="M0 0h6l3 3v7.2h-9z" fill="#2c68b2"/><path d="M1 1h1.5v3.5h-1.5z" fill="#8fc0f0"/><path d="M3.5 2h4v1.5h-4z" fill="#5c9be0"/><path d="M0 5.5l9 3v1.7h-9z" fill="#f8b21e"/></svg>
  <div class="t dt" style="left:252.7px;top:22.2px">当前图形:</div>
  <div class="t ds" style="left:323.2px;top:22.2px">Drawing2.dwg</div>
  <div class="abs" style="left:7.9px;top:46.7px;width:423.2px;height:264.3px;background:#fff;border:1px solid #d9d9d9"></div>
  <div class="abs" style="left:7.9px;top:33.4px;width:32.7px;height:14.3px;background:#fff;border:1px solid #d9d9d9;border-bottom:none"></div>
  <div class="t dt" style="left:15.4px;top:35.4px">文件</div>
  <div class="abs" style="left:40.1px;top:35.2px;width:28.6px;height:11.5px;background:#d8eaf9;border:1px solid #cfe2f3;border-bottom:none"></div>
  <div class="t dt" style="left:41.5px;top:36.9px">显示</div>
  <div class="abs" style="left:67.7px;top:35.2px;width:45.1px;height:11.5px;background:#f0f0f0;border:1px solid #d9d9d9;border-bottom:none"></div>
  <div class="t dt" style="left:71.5px;top:36.9px">打开和保存</div>
  <div class="abs" style="left:111.8px;top:35.2px;width:45.1px;height:11.5px;background:#f0f0f0;border:1px solid #d9d9d9;border-bottom:none"></div>
  <div class="t dt" style="left:115.5px;top:36.9px">打印和发布</div>
  <div class="abs" style="left:155.9px;top:35.2px;width:30.6px;height:11.5px;background:#f0f0f0;border:1px solid #d9d9d9;border-bottom:none"></div>
  <div class="t dt" style="left:159.5px;top:36.9px">系统</div>
  <div class="abs" style="left:185.5px;top:35.2px;width:52.0px;height:11.5px;background:#f0f0f0;border:1px solid #d9d9d9;border-bottom:none"></div>
  <div class="t dt" style="left:189.4px;top:36.9px">用户系统配置</div>
  <div class="abs" style="left:236.5px;top:35.2px;width:31.4px;height:11.5px;background:#f0f0f0;border:1px solid #d9d9d9;border-bottom:none"></div>
  <div class="t dt" style="left:240.5px;top:36.9px">绘图</div>
  <div class="abs" style="left:266.9px;top:35.2px;width:37.6px;height:11.5px;background:#f0f0f0;border:1px solid #d9d9d9;border-bottom:none"></div>
  <div class="t dt" style="left:270.8px;top:36.9px">三维建模</div>
  <div class="abs" style="left:303.5px;top:35.2px;width:30.6px;height:11.5px;background:#f0f0f0;border:1px solid #d9d9d9;border-bottom:none"></div>
  <div class="t dt" style="left:306.5px;top:36.9px">选择集</div>
  <div class="abs" style="left:333.1px;top:35.2px;width:29.8px;height:11.5px;background:#f0f0f0;border:1px solid #d9d9d9;border-bottom:none"></div>
  <div class="t dt" style="left:336.2px;top:36.9px">配置</div>
  <div class="t dt" style="left:14.5px;top:52.5px">搜索路径、文件名和文件位置:</div>
  <div id="tree" class="abs" style="left:14.5px;top:64.2px;width:322.5px;height:211px;background:#fff;border:1px solid #9a9a9a;overflow:hidden">
    <div class="abs" style="left:8.7px;top:8px;width:0;height:200px;border-left:1px dotted #cfcfcf"></div>
    <div class="abs" style="left:6.2px;top:4.7px;width:5.6px;height:5.6px;background:#fff;border:.8px solid #adadad"></div>
    <div class="abs" style="left:7.5px;top:7.1px;width:3px;height:.8px;background:#3d5a8a"></div><div class="abs" style="left:8.6px;top:6.0px;width:.8px;height:3px;background:#3d5a8a"></div>
    <div class="abs" style="left:13px;top:7.3px;width:3.5px;height:0;border-top:1px dotted #b8b8b8"></div>
    <svg style="left:18.6px;top:1.8px" width="12.1" height="10.5" viewBox="0 0 11 10" preserveAspectRatio="none"><path d="M.9 2.3l1.6-1.5h2.3l1.2 1.3h2.8v2.4" fill="#e8d84a" stroke="#15152e" stroke-width="1.2"/><path d="M.9 2.3v5.2l2 1.8" fill="none" stroke="#15152e" stroke-width="1.2"/><rect x="2.9" y="4.4" width="7.5" height="4.9" fill="#faee28" stroke="#15152e" stroke-width="1"/><path d="M1.5 3v4.3l1.3 1.2v-4.2z" fill="#b9ac2a"/></svg>
    <div class="abs" style="left:31px;top:1.1px;width:62.5px;height:12.5px;background:#0a64d2"></div>
    <div class="t dt" style="left:32.7px;top:2.4px;color:#fff">支持文件搜索路径</div>
    <div class="abs" style="left:6.2px;top:17.3px;width:5.6px;height:5.6px;background:#fff;border:.8px solid #adadad"></div>
    <div class="abs" style="left:7.5px;top:19.7px;width:3px;height:.8px;background:#3d5a8a"></div><div class="abs" style="left:8.6px;top:18.6px;width:.8px;height:3px;background:#3d5a8a"></div>
    <div class="abs" style="left:13px;top:19.9px;width:3.5px;height:0;border-top:1px dotted #b8b8b8"></div>
    <svg style="left:18.6px;top:14.4px" width="12.1" height="10.5" viewBox="0 0 11 10" preserveAspectRatio="none"><path d="M.9 2.3l1.6-1.5h2.3l1.2 1.3h2.8v2.4" fill="#e8d84a" stroke="#15152e" stroke-width="1.2"/><path d="M.9 2.3v5.2l2 1.8" fill="none" stroke="#15152e" stroke-width="1.2"/><rect x="2.9" y="4.4" width="7.5" height="4.9" fill="#faee28" stroke="#15152e" stroke-width="1"/><path d="M1.5 3v4.3l1.3 1.2v-4.2z" fill="#b9ac2a"/></svg>
    <div class="t dt" style="left:32.7px;top:15.0px">有效的支持文件搜索路径</div>
    <div class="abs" style="left:6.2px;top:29.8px;width:5.6px;height:5.6px;background:#fff;border:.8px solid #adadad"></div>
    <div class="abs" style="left:7.5px;top:32.2px;width:3px;height:.8px;background:#3d5a8a"></div><div class="abs" style="left:8.6px;top:31.1px;width:.8px;height:3px;background:#3d5a8a"></div>
    <div class="abs" style="left:13px;top:32.4px;width:3.5px;height:0;border-top:1px dotted #b8b8b8"></div>
    <svg style="left:18.6px;top:26.9px" width="12.1" height="10.5" viewBox="0 0 11 10" preserveAspectRatio="none"><path d="M.9 2.3l1.6-1.5h2.3l1.2 1.3h2.8v2.4" fill="#e8d84a" stroke="#15152e" stroke-width="1.2"/><path d="M.9 2.3v5.2l2 1.8" fill="none" stroke="#15152e" stroke-width="1.2"/><rect x="2.9" y="4.4" width="7.5" height="4.9" fill="#faee28" stroke="#15152e" stroke-width="1"/><path d="M1.5 3v4.3l1.3 1.2v-4.2z" fill="#b9ac2a"/></svg>
    <div class="t dt" style="left:32.7px;top:27.5px">受信任的位置</div>
    <div class="abs" style="left:6.2px;top:42.4px;width:5.6px;height:5.6px;background:#fff;border:.8px solid #adadad"></div>
    <div class="abs" style="left:7.5px;top:44.8px;width:3px;height:.8px;background:#3d5a8a"></div><div class="abs" style="left:8.6px;top:43.7px;width:.8px;height:3px;background:#3d5a8a"></div>
    <div class="abs" style="left:13px;top:45.0px;width:3.5px;height:0;border-top:1px dotted #b8b8b8"></div>
    <svg style="left:18.6px;top:39.5px" width="12.1" height="10.5" viewBox="0 0 11 10" preserveAspectRatio="none"><path d="M.9 2.3l1.6-1.5h2.3l1.2 1.3h2.8v2.4" fill="#e8d84a" stroke="#15152e" stroke-width="1.2"/><path d="M.9 2.3v5.2l2 1.8" fill="none" stroke="#15152e" stroke-width="1.2"/><rect x="2.9" y="4.4" width="7.5" height="4.9" fill="#faee28" stroke="#15152e" stroke-width="1"/><path d="M1.5 3v4.3l1.3 1.2v-4.2z" fill="#b9ac2a"/></svg>
    <div class="t dt" style="left:32.7px;top:40.1px">设备驱动程序文件搜索路径</div>
    <div class="abs" style="left:6.2px;top:54.9px;width:5.6px;height:5.6px;background:#fff;border:.8px solid #adadad"></div>
    <div class="abs" style="left:7.5px;top:57.3px;width:3px;height:.8px;background:#3d5a8a"></div><div class="abs" style="left:8.6px;top:56.2px;width:.8px;height:3px;background:#3d5a8a"></div>
    <div class="abs" style="left:13px;top:57.5px;width:3.5px;height:0;border-top:1px dotted #b8b8b8"></div>
    <svg style="left:19px;top:52.2px" width="9" height="10" viewBox="0 0 9 10"><path d="M.8 1.5l1-1h5.7v8.8h-5.7l-1-1z" fill="#e4d000" stroke="#111" stroke-width="1.1"/><path d="M3.2 2.5v5M5.8 2.5v5M3.2 5h2.6" stroke="#111" stroke-width="1"/></svg>
    <div class="t dt" style="left:32.7px;top:52.6px">工程文件搜索路径</div>
    <div class="abs" style="left:6.2px;top:67.5px;width:5.6px;height:5.6px;background:#fff;border:.8px solid #adadad"></div>
    <div class="abs" style="left:7.5px;top:69.9px;width:3px;height:.8px;background:#3d5a8a"></div><div class="abs" style="left:8.6px;top:68.8px;width:.8px;height:3px;background:#3d5a8a"></div>
    <div class="abs" style="left:13px;top:70.1px;width:3.5px;height:0;border-top:1px dotted #b8b8b8"></div>
    <svg style="left:19px;top:65.0px" width="9" height="10" viewBox="0 0 9 10"><path d="M.8 1.2h4.5l1.9 1.9v6.3h-6.4z" fill="#fff" stroke="#888" stroke-width=".9"/><path d="M5.3 1.2l1.9 1.9v6.3h-6.4" fill="none" stroke="#111" stroke-width="1.1"/></svg>
    <div class="t dt" style="left:32.7px;top:65.2px">自定义文件</div>
    <div class="abs" style="left:6.2px;top:80.0px;width:5.6px;height:5.6px;background:#fff;border:.8px solid #adadad"></div>
    <div class="abs" style="left:7.5px;top:82.4px;width:3px;height:.8px;background:#3d5a8a"></div><div class="abs" style="left:8.6px;top:81.3px;width:.8px;height:3px;background:#3d5a8a"></div>
    <div class="abs" style="left:13px;top:82.6px;width:3.5px;height:0;border-top:1px dotted #b8b8b8"></div>
    <svg style="left:19px;top:77.5px" width="9" height="10" viewBox="0 0 9 10"><path d="M.8 1.2h4.5l1.9 1.9v6.3h-6.4z" fill="#fff" stroke="#888" stroke-width=".9"/><path d="M5.3 1.2l1.9 1.9v6.3h-6.4" fill="none" stroke="#111" stroke-width="1.1"/></svg>
    <div class="t dt" style="left:32.7px;top:77.7px">帮助和其他文件名</div>
    <div class="abs" style="left:6.2px;top:92.6px;width:5.6px;height:5.6px;background:#fff;border:.8px solid #adadad"></div>
    <div class="abs" style="left:7.5px;top:95.0px;width:3px;height:.8px;background:#3d5a8a"></div><div class="abs" style="left:8.6px;top:93.9px;width:.8px;height:3px;background:#3d5a8a"></div>
    <div class="abs" style="left:13px;top:95.2px;width:3.5px;height:0;border-top:1px dotted #b8b8b8"></div>
    <svg style="left:19px;top:90.1px" width="9" height="10" viewBox="0 0 9 10"><path d="M.8 1.2h4.5l1.9 1.9v6.3h-6.4z" fill="#fff" stroke="#888" stroke-width=".9"/><path d="M5.3 1.2l1.9 1.9v6.3h-6.4" fill="none" stroke="#111" stroke-width="1.1"/></svg>
    <div class="t dt" style="left:32.7px;top:90.3px">文本编辑器、词典和字体文件名</div>
    <div class="abs" style="left:6.2px;top:105.1px;width:5.6px;height:5.6px;background:#fff;border:.8px solid #adadad"></div>
    <div class="abs" style="left:7.5px;top:107.5px;width:3px;height:.8px;background:#3d5a8a"></div><div class="abs" style="left:8.6px;top:106.4px;width:.8px;height:3px;background:#3d5a8a"></div>
    <div class="abs" style="left:13px;top:107.7px;width:3.5px;height:0;border-top:1px dotted #b8b8b8"></div>
    <svg style="left:19px;top:102.6px" width="9" height="10" viewBox="0 0 9 10"><path d="M.8 1.2h4.5l1.9 1.9v6.3h-6.4z" fill="#fff" stroke="#888" stroke-width=".9"/><path d="M5.3 1.2l1.9 1.9v6.3h-6.4" fill="none" stroke="#111" stroke-width="1.1"/></svg>
    <div class="t dt" style="left:32.7px;top:102.8px">打印文件、后台打印程序和前导部分名称</div>
    <div class="abs" style="left:6.2px;top:117.7px;width:5.6px;height:5.6px;background:#fff;border:.8px solid #adadad"></div>
    <div class="abs" style="left:7.5px;top:120.1px;width:3px;height:.8px;background:#3d5a8a"></div><div class="abs" style="left:8.6px;top:119.0px;width:.8px;height:3px;background:#3d5a8a"></div>
    <div class="abs" style="left:13px;top:120.3px;width:3.5px;height:0;border-top:1px dotted #b8b8b8"></div>
    <svg style="left:19px;top:115.2px" width="9" height="10" viewBox="0 0 9 10"><path d="M.8 1.2h4.5l1.9 1.9v6.3h-6.4z" fill="#fff" stroke="#888" stroke-width=".9"/><path d="M5.3 1.2l1.9 1.9v6.3h-6.4" fill="none" stroke="#111" stroke-width="1.1"/></svg>
    <div class="t dt" style="left:32.7px;top:115.4px">打印机支持文件路径</div>
    <div class="abs" style="left:6.2px;top:130.2px;width:5.6px;height:5.6px;background:#fff;border:.8px solid #adadad"></div>
    <div class="abs" style="left:7.5px;top:132.6px;width:3px;height:.8px;background:#3d5a8a"></div><div class="abs" style="left:8.6px;top:131.5px;width:.8px;height:3px;background:#3d5a8a"></div>
    <div class="abs" style="left:13px;top:132.8px;width:3.5px;height:0;border-top:1px dotted #b8b8b8"></div>
    <svg style="left:18.6px;top:127.3px" width="12.1" height="10.5" viewBox="0 0 11 10" preserveAspectRatio="none"><path d="M.9 2.3l1.6-1.5h2.3l1.2 1.3h2.8v2.4" fill="#e8d84a" stroke="#15152e" stroke-width="1.2"/><path d="M.9 2.3v5.2l2 1.8" fill="none" stroke="#15152e" stroke-width="1.2"/><rect x="2.9" y="4.4" width="7.5" height="4.9" fill="#faee28" stroke="#15152e" stroke-width="1"/><path d="M1.5 3v4.3l1.3 1.2v-4.2z" fill="#b9ac2a"/></svg>
    <div class="t dt" style="left:32.7px;top:127.9px">自动保存文件位置</div>
    <div class="abs" style="left:6.2px;top:142.8px;width:5.6px;height:5.6px;background:#fff;border:.8px solid #adadad"></div>
    <div class="abs" style="left:7.5px;top:145.2px;width:3px;height:.8px;background:#3d5a8a"></div><div class="abs" style="left:8.6px;top:144.1px;width:.8px;height:3px;background:#3d5a8a"></div>
    <div class="abs" style="left:13px;top:145.4px;width:3.5px;height:0;border-top:1px dotted #b8b8b8"></div>
    <svg style="left:18.6px;top:139.9px" width="12.1" height="10.5" viewBox="0 0 11 10" preserveAspectRatio="none"><path d="M.9 2.3l1.6-1.5h2.3l1.2 1.3h2.8v2.4" fill="#e8d84a" stroke="#15152e" stroke-width="1.2"/><path d="M.9 2.3v5.2l2 1.8" fill="none" stroke="#15152e" stroke-width="1.2"/><rect x="2.9" y="4.4" width="7.5" height="4.9" fill="#faee28" stroke="#15152e" stroke-width="1"/><path d="M1.5 3v4.3l1.3 1.2v-4.2z" fill="#b9ac2a"/></svg>
    <div class="t dt" style="left:32.7px;top:140.5px">配色系统位置</div>
    <div class="abs" style="left:6.2px;top:155.3px;width:5.6px;height:5.6px;background:#fff;border:.8px solid #adadad"></div>
    <div class="abs" style="left:7.5px;top:157.7px;width:3px;height:.8px;background:#3d5a8a"></div><div class="abs" style="left:8.6px;top:156.6px;width:.8px;height:3px;background:#3d5a8a"></div>
    <div class="abs" style="left:13px;top:157.9px;width:3.5px;height:0;border-top:1px dotted #b8b8b8"></div>
    <svg style="left:18.6px;top:152.4px" width="12.1" height="10.5" viewBox="0 0 11 10" preserveAspectRatio="none"><path d="M.9 2.3l1.6-1.5h2.3l1.2 1.3h2.8v2.4" fill="#e8d84a" stroke="#15152e" stroke-width="1.2"/><path d="M.9 2.3v5.2l2 1.8" fill="none" stroke="#15152e" stroke-width="1.2"/><rect x="2.9" y="4.4" width="7.5" height="4.9" fill="#faee28" stroke="#15152e" stroke-width="1"/><path d="M1.5 3v4.3l1.3 1.2v-4.2z" fill="#b9ac2a"/></svg>
    <div class="t dt" style="left:32.7px;top:153.0px"><b>PDF </b>输出图像位置</div>
    <div class="abs" style="left:6.2px;top:167.9px;width:5.6px;height:5.6px;background:#fff;border:.8px solid #adadad"></div>
    <div class="abs" style="left:7.5px;top:170.2px;width:3px;height:.8px;background:#3d5a8a"></div><div class="abs" style="left:8.6px;top:169.2px;width:.8px;height:3px;background:#3d5a8a"></div>
    <div class="abs" style="left:13px;top:170.5px;width:3.5px;height:0;border-top:1px dotted #b8b8b8"></div>
    <svg style="left:18.6px;top:165.0px" width="12.1" height="10.5" viewBox="0 0 11 10" preserveAspectRatio="none"><path d="M.9 2.3l1.6-1.5h2.3l1.2 1.3h2.8v2.4" fill="#e8d84a" stroke="#15152e" stroke-width="1.2"/><path d="M.9 2.3v5.2l2 1.8" fill="none" stroke="#15152e" stroke-width="1.2"/><rect x="2.9" y="4.4" width="7.5" height="4.9" fill="#faee28" stroke="#15152e" stroke-width="1"/><path d="M1.5 3v4.3l1.3 1.2v-4.2z" fill="#b9ac2a"/></svg>
    <div class="t dt" style="left:32.7px;top:165.6px">数据源位置</div>
    <div class="abs" style="left:6.2px;top:180.4px;width:5.6px;height:5.6px;background:#fff;border:.8px solid #adadad"></div>
    <div class="abs" style="left:7.5px;top:182.8px;width:3px;height:.8px;background:#3d5a8a"></div><div class="abs" style="left:8.6px;top:181.7px;width:.8px;height:3px;background:#3d5a8a"></div>
    <div class="abs" style="left:13px;top:183.0px;width:3.5px;height:0;border-top:1px dotted #b8b8b8"></div>
    <svg style="left:19px;top:177.9px" width="9" height="10" viewBox="0 0 9 10"><path d="M.8 1.2h4.5l1.9 1.9v6.3h-6.4z" fill="#fff" stroke="#888" stroke-width=".9"/><path d="M5.3 1.2l1.9 1.9v6.3h-6.4" fill="none" stroke="#111" stroke-width="1.1"/></svg>
    <div class="t dt" style="left:32.7px;top:178.1px">样板设置</div>
    <div class="abs" style="left:6.2px;top:193.0px;width:5.6px;height:5.6px;background:#fff;border:.8px solid #adadad"></div>
    <div class="abs" style="left:7.5px;top:195.3px;width:3px;height:.8px;background:#3d5a8a"></div><div class="abs" style="left:8.6px;top:194.2px;width:.8px;height:3px;background:#3d5a8a"></div>
    <div class="abs" style="left:13px;top:195.6px;width:3.5px;height:0;border-top:1px dotted #b8b8b8"></div>
    <svg style="left:18.6px;top:190.1px" width="12.1" height="10.5" viewBox="0 0 11 10" preserveAspectRatio="none"><path d="M.9 2.3l1.6-1.5h2.3l1.2 1.3h2.8v2.4" fill="#e8d84a" stroke="#15152e" stroke-width="1.2"/><path d="M.9 2.3v5.2l2 1.8" fill="none" stroke="#15152e" stroke-width="1.2"/><rect x="2.9" y="4.4" width="7.5" height="4.9" fill="#faee28" stroke="#15152e" stroke-width="1"/><path d="M1.5 3v4.3l1.3 1.2v-4.2z" fill="#b9ac2a"/></svg>
    <div class="t dt" style="left:32.7px;top:190.7px">工具选项板文件位置</div>
    <div class="abs" style="left:6.2px;top:205.5px;width:5.6px;height:5.6px;background:#fff;border:.8px solid #adadad"></div>
    <div class="abs" style="left:7.5px;top:207.9px;width:3px;height:.8px;background:#3d5a8a"></div><div class="abs" style="left:8.6px;top:206.8px;width:.8px;height:3px;background:#3d5a8a"></div>
    <div class="abs" style="left:13px;top:208.1px;width:3.5px;height:0;border-top:1px dotted #b8b8b8"></div>
    <svg style="left:18.6px;top:202.6px" width="12.1" height="10.5" viewBox="0 0 11 10" preserveAspectRatio="none"><path d="M.9 2.3l1.6-1.5h2.3l1.2 1.3h2.8v2.4" fill="#e8d84a" stroke="#15152e" stroke-width="1.2"/><path d="M.9 2.3v5.2l2 1.8" fill="none" stroke="#15152e" stroke-width="1.2"/><rect x="2.9" y="4.4" width="7.5" height="4.9" fill="#faee28" stroke="#15152e" stroke-width="1"/><path d="M1.5 3v4.3l1.3 1.2v-4.2z" fill="#b9ac2a"/></svg>
    <div class="t dt" style="left:32.7px;top:203.2px">编写选项板文件位置</div>
    <div class="abs" style="left:310px;top:0;width:9.5px;height:210px;background:#f0f0f0"></div>
    <div class="abs" style="left:310px;top:11.3px;width:9.5px;height:118px;background:#cdcdcd"></div>
    <svg style="left:311.8px;top:4.2px" width="6" height="4" viewBox="0 0 6 4"><path d="M.5 3.5l2.5-2.8 2.5 2.8" fill="none" stroke="#404040" stroke-width="1.2"/></svg>
    <svg style="left:311.8px;top:201.5px" width="6" height="4" viewBox="0 0 6 4"><path d="M.5.5l2.5 2.8 2.5-2.8" fill="none" stroke="#404040" stroke-width="1.2"/></svg>
  </div>
  <div class="btn" style="left:347.7px;top:65.3px;width:69.3px">浏览<i>(B)...</i></div>
  <div class="btn" style="left:347.7px;top:84.2px;width:69.3px">添加<i>(D)...</i></div>
  <div class="btn dis" style="left:347.7px;top:102.9px;width:69.3px">删除<i>(R)</i></div>
  <div class="btn dis" style="left:347.7px;top:121.6px;width:69.3px">上移<i>(U)</i></div>
  <div class="btn dis" style="left:347.7px;top:140.2px;width:69.3px">下移<i>(M)</i></div>
  <div class="btn dis" style="left:347.7px;top:158.9px;width:69.3px">置为当前<i>(S)</i></div>
  <div class="btn def" style="left:234.7px;top:317.4px;width:44.8px">确定</div>
  <div class="btn" style="left:284.5px;top:317.4px;width:45.8px">取消</div>
  <div class="btn" style="left:335.3px;top:317.4px;width:46.1px">应用<i>(A)</i></div>
  <div class="btn" style="left:386.4px;top:317.4px;width:45.7px">帮助<i>(H)</i></div>
  <svg style="left:56.4px;top:39.2px" width="9" height="13" viewBox="0 0 9 13"><path d="M.5.5v10l2.3-2.2 1.7 3.7 1.6-.7-1.7-3.6h3.2z" fill="#fff" stroke="#222" stroke-width=".8"/></svg>
</div>
<!--enddlg-->
<div id="cap" class="abs">03基础设置</div>
</body>
</html>
